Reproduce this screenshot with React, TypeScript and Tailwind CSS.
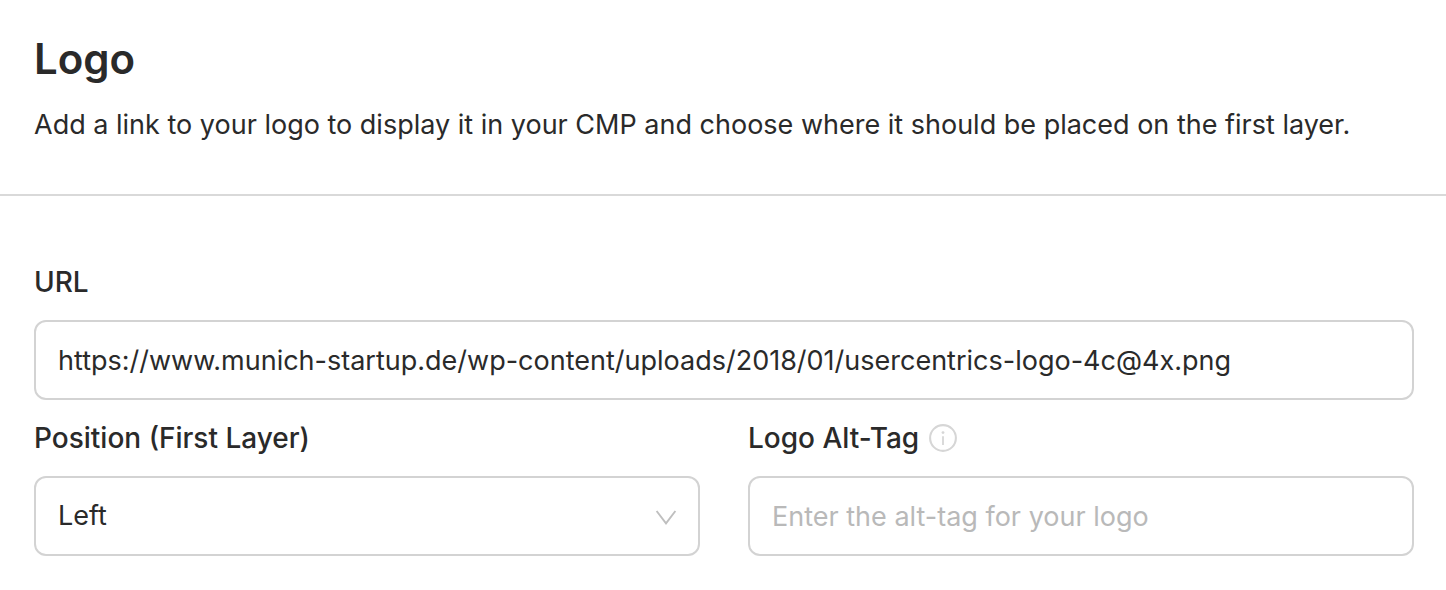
export default function App() {
  const label = "text-[28px] leading-[40px] font-medium";
  const box = "h-[80px] w-full rounded-[12px] border-2 border-[#d3d3d3] bg-white px-[22px] text-[27px]";
  return (
    <main className="bg-white font-['Inter',sans-serif] text-[#2a2a2a]">
      <header className="border-b-2 border-[#d9d9d9] px-[34px] pt-[31px] pb-[47px]">
        <h1 className="text-[42px] leading-[56px] font-semibold">Logo</h1>
        <p className="mt-[16px] text-[27px] leading-[44px]">
          Add a link to your logo to display it in your CMP and choose where it should be placed on the first layer.
        </p>
      </header>
      <form className="pt-[66px] pr-[32px] pb-[34px] pl-[34px]">
        <div className="flex flex-col gap-[18px]">
          <label htmlFor="url" className={label}>URL</label>
          <input id="url" type="text" className={box} defaultValue="https://www.munich-startup.de/wp-content/uploads/2018/01/usercentrics-logo-4c@4x.png" />
        </div>
        <div className="mt-[18px] grid grid-cols-2 gap-[48px]">
          <div className="flex flex-col gap-[18px]">
            <label htmlFor="position" className={label}>Position (First Layer)</label>
            <div className="relative">
              <select id="position" className={`${box} appearance-none`} defaultValue="Left">
                <option>Left</option>
                <option>Center</option>
                <option>Right</option>
              </select>
              <svg className="pointer-events-none absolute top-[33px] right-[23px]" width="22" height="18" viewBox="0 0 22 18" fill="none" stroke="#bfbfbf" strokeWidth="1.9">
                <path d="M1.6 2 L11 14.4 L20.4 2" />
              </svg>
            </div>
          </div>
          <div className="flex flex-col gap-[18px]">
            <div className="flex items-center gap-[10px]">
              <label htmlFor="alt" className={label}>Logo Alt-Tag</label>
              <svg width="28" height="28" viewBox="0 0 28 28" fill="none" stroke="#d6d6d6" strokeWidth="2.1">
                <circle cx="14" cy="14" r="12.9" />
                <path d="M14 12.3 V21" strokeWidth="1.8" />
                <circle cx="14" cy="8.6" r="1.4" fill="#d6d6d6" stroke="none" />
              </svg>
            </div>
            <input id="alt" type="text" placeholder="Enter the alt-tag for your logo" className={`${box} placeholder:text-[#b9b9b9]`} />
          </div>
        </div>
      </form>
    </main>
  );
}
